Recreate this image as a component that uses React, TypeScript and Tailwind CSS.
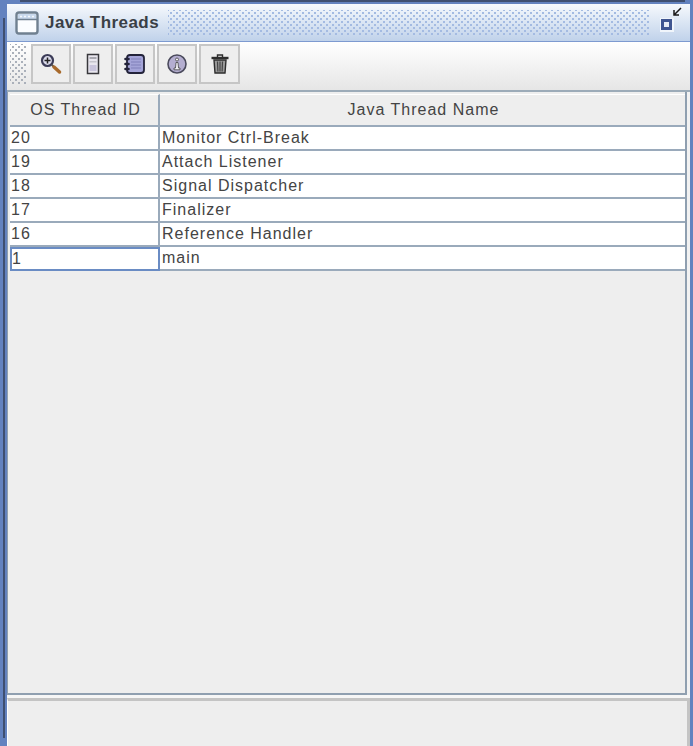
const rows = [
  ['20', 'Monitor Ctrl-Break'],
  ['19', 'Attach Listener'],
  ['18', 'Signal Dispatcher'],
  ['17', 'Finalizer'],
  ['16', 'Reference Handler'],
  ['1', 'main'],
]

function ZoomIcon() {
  return (
    <svg width="24" height="24" viewBox="0 0 24 24">
      <circle cx="8.5" cy="8.5" r="5.5" fill="#dcdcec" stroke="#3c3c58" strokeWidth="2.2" />
      <path d="M5.5 8.5h6M8.5 5.5v6" stroke="#222" strokeWidth="1.5" />
      <path d="M12.5 12.5l2 2" stroke="#555" strokeWidth="2" />
      <path d="M15 15l5.5 5" stroke="#a86a2c" strokeWidth="3.5" strokeLinecap="round" />
    </svg>
  )
}

function ServerIcon() {
  return (
    <svg width="24" height="24" viewBox="0 0 24 24">
      <rect x="6.5" y="2.5" width="11" height="19" fill="#e8e6ee" stroke="#38383c" strokeWidth="1.5" />
      <rect x="8.5" y="5" width="7" height="2" fill="#a8a8b0" />
      <rect x="8.5" y="9" width="7" height="1.5" fill="#c4c4cc" />
      <rect x="8.5" y="13" width="7" height="6" fill="#c8c4dc" />
    </svg>
  )
}

function NotebookIcon() {
  return (
    <svg width="24" height="24" viewBox="0 0 24 24">
      <rect x="4" y="3" width="17" height="18" rx="3" fill="#a4a4d8" stroke="#23233a" strokeWidth="1.8" />
      <path d="M8 7h10M8 10h10M8 13h10M8 16h10" stroke="#8080ba" strokeWidth="1" />
      <path d="M2.5 7h3M2.5 12h3M2.5 17h3" stroke="#23233a" strokeWidth="2.6" strokeLinecap="round" />
    </svg>
  )
}

function InfoIcon() {
  return (
    <svg width="24" height="24" viewBox="0 0 24 24">
      <circle cx="12" cy="12" r="9" fill="#b4aed0" stroke="#4a4a5c" strokeWidth="1.6" />
      <circle cx="12" cy="7.5" r="1.5" fill="#f2f2f6" stroke="#444" strokeWidth="0.8" />
      <path d="M11 10.5h2l.5 5.5h1.5v1.8H9V16h1.5z" fill="#f2f2f6" stroke="#444" strokeWidth="0.8" />
    </svg>
  )
}

function TrashIcon() {
  return (
    <svg width="24" height="24" viewBox="0 0 24 24">
      <path d="M3.5 6h17" stroke="#2e2e2e" strokeWidth="2.4" />
      <path d="M9.5 5V3h5v2" fill="none" stroke="#2e2e2e" strokeWidth="1.4" />
      <path d="M6 8h12l-1 13H7z" fill="#9a9a9a" stroke="#2e2e2e" strokeWidth="1.4" />
      <path d="M9.5 9.5l.4 10M12 9.5v10M14.5 9.5l-.4 10" stroke="#444" strokeWidth="1.2" />
    </svg>
  )
}

function ToolButton({ children, wide }: { children: React.ReactNode; wide?: boolean }) {
  return (
    <div className={`${wide ? 'w-[41px]' : 'w-10'} h-10 flex items-center justify-center border-2 border-[#c6c6c6] bg-[#eeeeee]`}>
      {children}
    </div>
  )
}

export default function App() {
  return (
    <div className="relative w-[693px] h-[746px] overflow-hidden bg-[#6382bf] pt-1 pl-[7px] pr-[3px] font-['Liberation_Sans',Arial,sans-serif] text-[#444444]">
      <div className="absolute left-[20px] right-[8px] top-0 h-[2px] bg-[#3f4f70]" />
      <div className="absolute left-[3px] top-[18px] bottom-[8px] w-[2px] bg-[#3f4f70]" />

      <div className="relative h-[38px] flex items-center pl-[8px] pr-[6px] gap-[6px] bg-gradient-to-b from-[#f6f9fd] to-[#c0d2ea] border-b border-[#7d9ad0]">
        <svg width="24" height="24" viewBox="0 0 24 24" className="shrink-0">
          <rect x="1.5" y="1.5" width="21" height="21" rx="2.5" fill="#fbfdff" stroke="#708090" strokeWidth="2.4" />
          <rect x="3" y="3" width="18" height="5" fill="#c8d8ec" />
          <path d="M2 8.5h20" stroke="#708090" strokeWidth="1.5" />
          <path d="M5 5.5h14" stroke="#f4f8fc" strokeWidth="1.5" strokeDasharray="2 2" />
        </svg>
        <span className="text-[17px] leading-none font-bold text-[#3a3f46] tracking-[0.45px] whitespace-nowrap">Java Threads</span>
        <div className="ml-[3px] w-[482px] h-[26px] bg-[radial-gradient(#a4bbe2_1.1px,transparent_1.5px),radial-gradient(#a4bbe2_1.1px,transparent_1.5px)] bg-[length:6px_6px] bg-[position:0_0,3px_3px]" />
        <svg width="24" height="34" viewBox="0 0 24 34" className="ml-auto shrink-0">
          <path d="M21 2l-7 7M14 4v5h5" fill="none" stroke="#1a1a1a" strokeWidth="1.5" />
          <rect x="0" y="12" width="14" height="14" fill="#f0f5fb" />
          <rect x="2.5" y="14.5" width="8" height="8" fill="#e8ecf4" stroke="#3f5590" strokeWidth="3" />
        </svg>
      </div>

      <div className="h-[50px] flex items-start pt-[2px] pl-[3px] gap-[2px] bg-gradient-to-b from-[#ffffff] to-[#e6e6e6] border-b-2 border-[#9cabb8]">
        <div className="w-[16px] h-10 mr-[3px] bg-[radial-gradient(#aab0ba_1.1px,transparent_1.5px),radial-gradient(#aab0ba_1.1px,transparent_1.5px)] bg-[length:6px_6px] bg-[position:0_0,3px_3px]" />
        <ToolButton><ZoomIcon /></ToolButton>
        <ToolButton><ServerIcon /></ToolButton>
        <ToolButton><NotebookIcon /></ToolButton>
        <ToolButton><InfoIcon /></ToolButton>
        <ToolButton wide><TrashIcon /></ToolButton>
      </div>

      <div className="bg-[#f2f2f2] pr-[3px]">
        <div className="h-[603px] bg-[#eeeeee] pl-[2px] border-r-2 border-b-2 border-[#8f9fb0] border-l border-l-[#8f9fb0]">
          <div className="grid grid-cols-[150px_1fr] pt-[2px] text-[16px] tracking-[1px]">
            <div className="h-[33px] flex items-center justify-center pl-[3px] bg-[#eeeeee] border-r-2 border-b-2 border-[#9aaabb] border-t border-t-white">OS Thread ID</div>
            <div className="h-[33px] flex items-center justify-center pl-[2px] bg-[#eeeeee] border-b-2 border-[#9aaabb] border-t border-t-white">Java Thread Name</div>
            {rows.map(([id, name], i) => (
              <div key={id} className="contents">
                <div className={`h-6 flex items-center bg-white ${i === 5 ? 'border-2 border-[#6a8cc4]' : 'pl-[1px] border-r-2 border-b-2 border-[#9aaabb]'}`}>{id}</div>
                <div className="h-6 flex items-center pl-[2px] bg-white border-b-2 border-[#9aaabb]">{name}</div>
              </div>
            ))}
          </div>
        </div>
      </div>

      <div className="h-[3px] bg-[#f6f6f6]" />
      <div className="h-[51px] bg-[#eeeeee] border-t-[3px] border-r-[3px] border-[#c4c4c4] border-l border-l-white" />
    </div>
  )
}
